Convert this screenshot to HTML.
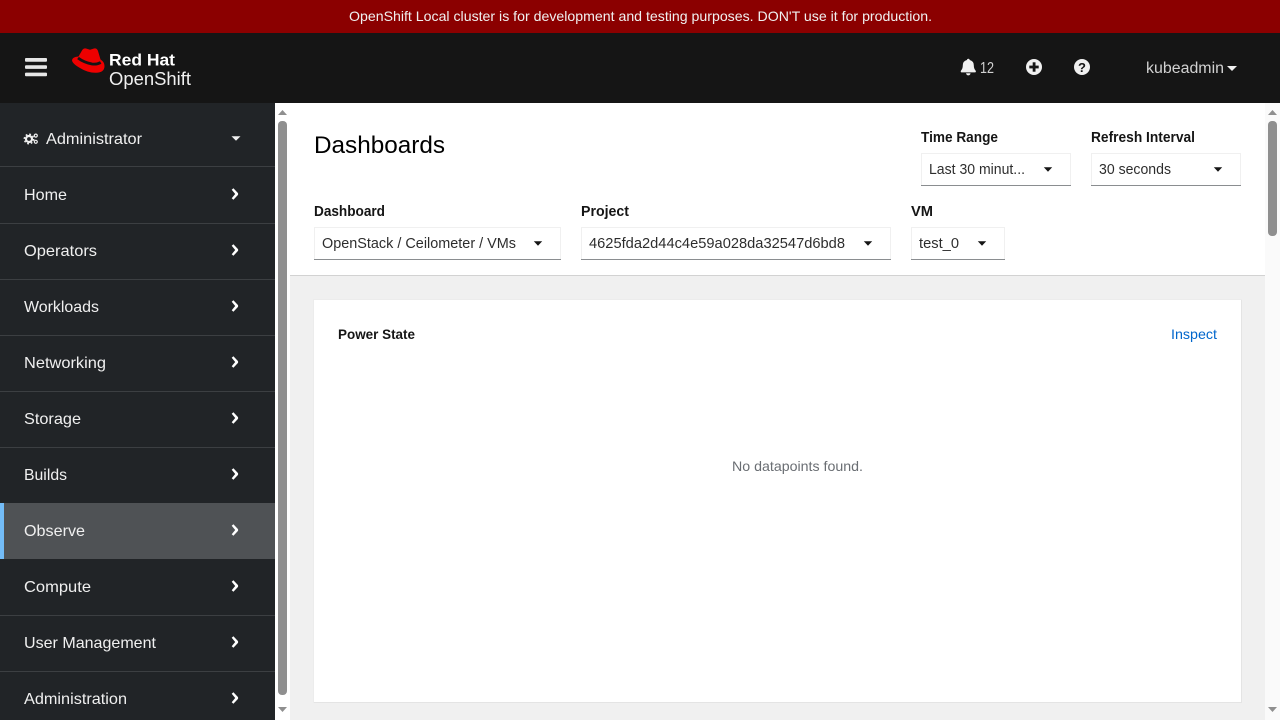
<!DOCTYPE html>
<html><head><meta charset="utf-8"><title>Dashboards</title>
<style>
html,body{margin:0;padding:0;width:1280px;height:720px;overflow:hidden;background:#fff}
svg{display:block}
text{font-family:"Liberation Sans",sans-serif;font-size:15px}
.nav{fill:#f0f0f0;font-size:16px}
.sel{fill:#151515;font-size:14.5px}
.lab{fill:#151515;font-size:14.5px;font-weight:bold}
</style></head><body>
<svg width="1280" height="720" viewBox="0 0 1280 720" xmlns="http://www.w3.org/2000/svg">
<defs>
<path id="chev" d="M-2.6 -4.2 L-0.9 -5.8 L3.6 -1 Q4.2 0 3.6 1 L-0.9 5.8 L-2.6 4.2 L0.9 0 Z" fill="#fff"/>
<path id="car" d="M-4.2 -2.2 H4.2 L0 2.3 Z" fill="#151515"/>
</defs>
<rect width="1280" height="720" fill="#fff"/>
<rect width="1280" height="33" fill="#8b0000"/>
<text x="349" y="21" fill="#f0f0f0" style="font-size:14px" textLength="583" lengthAdjust="spacingAndGlyphs">OpenShift Local cluster is for development and testing purposes. DON'T use it for production.</text>
<rect y="33" width="1280" height="70" fill="#151515"/>
<!-- hamburger -->
<rect x="25" y="58" width="22" height="3.7" rx="1" fill="#e6e6e6"/>
<rect x="25" y="65.2" width="22" height="3.7" rx="1" fill="#e6e6e6"/>
<rect x="25" y="72.6" width="22" height="3.7" rx="1" fill="#e6e6e6"/>
<!-- logo hat -->
<path d="M78.5 56.5 L82 50.5 Q83.5 48 86 48.5 L90 49.8 L94 48.5 Q97 48 98 51 L100.5 59.5 Q104.5 62 104.5 66 Q104.5 72.5 96 72.8 Q88 73 80 68 Q72 63.5 72 60 Q72.5 57 78.5 56.5 Z" fill="#e00"/>
<path d="M78 58 Q84 62.5 92 64 Q97 64.6 100.7 62.5" fill="none" stroke="#151515" stroke-width="2.8"/>
<text x="109" y="65.5" fill="#fff" style="font-size:16.5px;font-weight:bold" textLength="66" lengthAdjust="spacingAndGlyphs">Red Hat</text>
<text x="109" y="85" fill="#f0f0f0" style="font-size:18px" textLength="82" lengthAdjust="spacingAndGlyphs">OpenShift</text>
<!-- bell -->
<path d="M968.3 58.7 a1.4 1.4 0 0 1 1.4 1.3 q4 1 4.1 5.3 q0 3.6 1.9 5.4 q0.6 1.4 -0.7 1.7 h-13.4 q-1.3 -0.3 -0.7 -1.7 q1.9 -1.8 1.9 -5.4 q0.1 -4.3 4.1 -5.3 a1.4 1.4 0 0 1 1.3 -1.3 Z M966.1 73.2 h4.4 a2.2 2.2 0 0 1 -4.4 0 Z" fill="#f0f0f0"/>
<text x="980" y="73" fill="#d2d2d2" style="font-size:16px" textLength="14" lengthAdjust="spacingAndGlyphs">12</text>
<!-- plus -->
<circle cx="1034" cy="67" r="8" fill="#f0f0f0"/>
<rect x="1032.7" y="62.3" width="2.8" height="9.4" fill="#151515"/>
<rect x="1029.3" y="65.6" width="9.4" height="2.8" fill="#151515"/>
<!-- help -->
<circle cx="1082" cy="67" r="8" fill="#f0f0f0"/>
<text x="1082" y="72" text-anchor="middle" fill="#151515" style="font-size:13px;font-weight:bold">?</text>
<text x="1146" y="73" fill="#d2d2d2" style="font-size:15.5px" textLength="78" lengthAdjust="spacingAndGlyphs">kubeadmin</text>
<path d="M1227 66 H1237 L1232 71 Z" fill="#f0f0f0"/>

<!-- sidebar -->
<rect y="103" width="275" height="617" fill="#212427"/>
<rect y="503" width="275" height="56" fill="#4f5255"/>
<rect y="503" width="4" height="56" fill="#73bcf7"/>
<g fill="#3c3f42">
<rect y="166" width="275" height="1"/><rect y="223" width="275" height="1"/>
<rect y="279" width="275" height="1"/><rect y="335" width="275" height="1"/>
<rect y="391" width="275" height="1"/><rect y="447" width="275" height="1"/>
<rect y="615" width="275" height="1"/><rect y="671" width="275" height="1"/>
</g>
<!-- cogs -->
<circle cx="29" cy="139" r="3" fill="none" stroke="#f0f0f0" stroke-width="2.2"/>
<circle cx="29" cy="139" r="4.7" fill="none" stroke="#f0f0f0" stroke-width="1.5" stroke-dasharray="1.8 1.9"/>
<circle cx="35.8" cy="135.6" r="1.5" fill="none" stroke="#f0f0f0" stroke-width="1.2"/>
<circle cx="35.8" cy="141.8" r="1.5" fill="none" stroke="#f0f0f0" stroke-width="1.2"/>
<text class="nav" x="46" y="144" textLength="96" lengthAdjust="spacingAndGlyphs">Administrator</text>
<path d="M231.5 136.2 H240.5 L236 140.8 Z" fill="#f0f0f0"/>
<text class="nav" x="24" y="200" textLength="43" lengthAdjust="spacingAndGlyphs">Home</text>
<text class="nav" x="24" y="256" textLength="73" lengthAdjust="spacingAndGlyphs">Operators</text>
<text class="nav" x="24" y="312" textLength="75" lengthAdjust="spacingAndGlyphs">Workloads</text>
<text class="nav" x="24" y="368" textLength="82" lengthAdjust="spacingAndGlyphs">Networking</text>
<text class="nav" x="24" y="424" textLength="57" lengthAdjust="spacingAndGlyphs">Storage</text>
<text class="nav" x="24" y="480" textLength="43" lengthAdjust="spacingAndGlyphs">Builds</text>
<text class="nav" x="24" y="536" textLength="61" lengthAdjust="spacingAndGlyphs">Observe</text>
<text class="nav" x="24" y="592" textLength="67" lengthAdjust="spacingAndGlyphs">Compute</text>
<text class="nav" x="24" y="648" textLength="132" lengthAdjust="spacingAndGlyphs">User Management</text>
<text class="nav" x="24" y="704" textLength="103" lengthAdjust="spacingAndGlyphs">Administration</text>
<use href="#chev" x="234.3" y="194"/><use href="#chev" x="234.3" y="250"/>
<use href="#chev" x="234.3" y="306"/><use href="#chev" x="234.3" y="362"/>
<use href="#chev" x="234.3" y="418"/><use href="#chev" x="234.3" y="474"/>
<use href="#chev" x="234.3" y="530"/><use href="#chev" x="234.3" y="586"/>
<use href="#chev" x="234.3" y="642"/><use href="#chev" x="234.3" y="698"/>

<!-- sidebar scrollbar -->
<rect x="275" y="103" width="15" height="617" fill="#fff"/>
<path d="M278 115 L282.5 110 L287 115 Z" fill="#8f8f8f"/>
<path d="M278 707 H287 L282.5 712 Z" fill="#8f8f8f"/>
<rect x="278" y="121" width="9" height="574" rx="4" fill="#8f8f8f"/>

<!-- content -->
<rect x="290" y="275" width="975" height="445" fill="#f0f0f0"/>
<rect x="290" y="275" width="975" height="1" fill="#d2d2d2"/>
<rect x="1265" y="103" width="15" height="617" fill="#fafafa"/>
<path d="M1268 115 L1272.5 110 L1277 115 Z" fill="#8f8f8f"/>
<path d="M1268 707 H1277 L1272.5 712 Z" fill="#8f8f8f"/>
<rect x="1268" y="121" width="9" height="115" rx="4" fill="#8f8f8f"/>

<text x="314" y="153" fill="#000" style="font-size:24px" textLength="131" lengthAdjust="spacingAndGlyphs">Dashboards</text>

<text class="lab" x="921" y="142" textLength="77" lengthAdjust="spacingAndGlyphs">Time Range</text>
<text class="lab" x="1091" y="142" textLength="104" lengthAdjust="spacingAndGlyphs">Refresh Interval</text>
<text class="lab" x="314" y="216" textLength="71" lengthAdjust="spacingAndGlyphs">Dashboard</text>
<text class="lab" x="581" y="216" textLength="48" lengthAdjust="spacingAndGlyphs">Project</text>
<text class="lab" x="911" y="216" textLength="22" lengthAdjust="spacingAndGlyphs">VM</text>

<g fill="#fff" stroke="#f0f0f0">
<rect x="921.5" y="153.5" width="149" height="32"/>
<rect x="1091.5" y="153.5" width="149" height="32"/>
<rect x="314.5" y="227.5" width="246" height="32"/>
<rect x="581.5" y="227.5" width="309" height="32"/>
<rect x="911.5" y="227.5" width="93" height="32"/>
</g>
<g fill="#8a8d90">
<rect x="921" y="185" width="150" height="1"/>
<rect x="1091" y="185" width="150" height="1"/>
<rect x="314" y="259" width="247" height="1"/>
<rect x="581" y="259" width="310" height="1"/>
<rect x="911" y="259" width="94" height="1"/>
</g>
<text class="sel" x="929" y="174" fill-opacity="0.9" textLength="96" lengthAdjust="spacingAndGlyphs">Last 30 minut...</text>
<text class="sel" x="1099" y="174" fill-opacity="0.9" textLength="72" lengthAdjust="spacingAndGlyphs">30 seconds</text>
<text class="sel" x="322" y="248" fill-opacity="0.9" textLength="194" lengthAdjust="spacingAndGlyphs">OpenStack / Ceilometer / VMs</text>
<text class="sel" x="589" y="248" fill-opacity="0.9" textLength="256" lengthAdjust="spacingAndGlyphs">4625fda2d44c4e59a028da32547d6bd8</text>
<text class="sel" x="919" y="248" fill-opacity="0.9" textLength="40" lengthAdjust="spacingAndGlyphs">test_0</text>
<use href="#car" x="1048" y="169.5"/><use href="#car" x="1218" y="169.5"/>
<use href="#car" x="538" y="243.5"/><use href="#car" x="868" y="243.5"/><use href="#car" x="982" y="243.5"/>

<!-- card -->
<rect x="313" y="299" width="929" height="404" fill="#ececec"/>
<rect x="314" y="300" width="928" height="403" fill="#e4e4e4"/>
<rect x="314" y="300" width="927" height="402" fill="#fff"/>
<text x="338" y="339" fill="#151515" style="font-size:14px;font-weight:bold" textLength="77" lengthAdjust="spacingAndGlyphs">Power State</text>
<text x="1171" y="339" fill="#0066cc" style="font-size:14px" textLength="46" lengthAdjust="spacingAndGlyphs">Inspect</text>
<text x="732" y="471" fill="#6a6e73" style="font-size:14px" textLength="131" lengthAdjust="spacingAndGlyphs">No datapoints found.</text>
</svg>
</body></html>
